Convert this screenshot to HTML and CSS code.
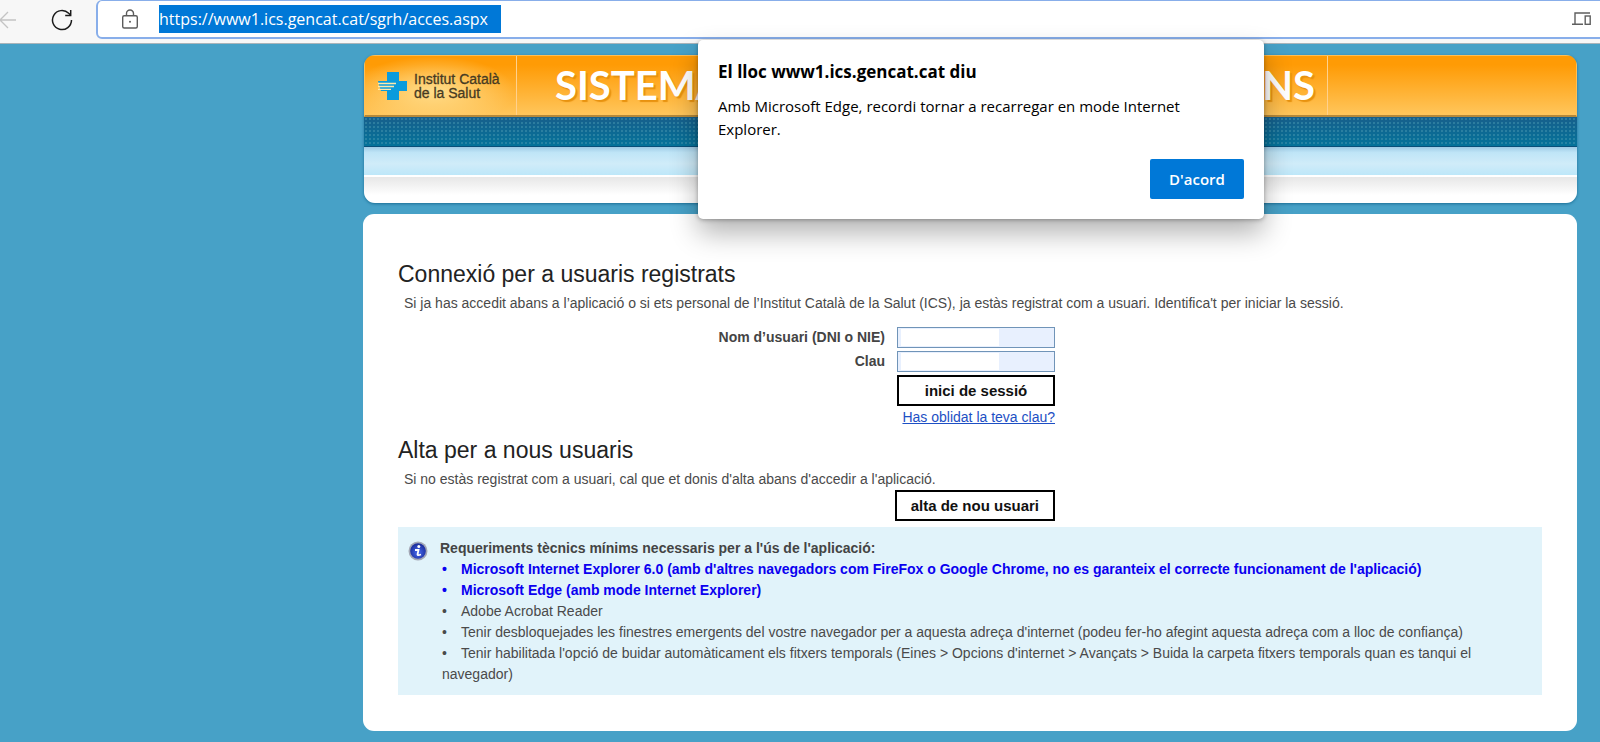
FILE: index.html
```html
<!DOCTYPE html>
<html lang="ca">
  <head>
    <meta charset="UTF-8" />
    <meta name="viewport" content="width=device-width, initial-scale=1.0" />
    <title>Institut Català de la Salut</title>
    <link rel="stylesheet" href="styles.css">
  </head>
  <body>
    <!-- Browser bar -->
    <div class="browser-bar">
      <button class="nav-button nav-back" aria-label="Enrere">
        <svg width="18" height="20" viewBox="0 0 18 20" fill="none" stroke="#c4c4c4" stroke-width="1.3">
          <path d="M16 10H0M8 2L0 10l8 8" />
        </svg>
      </button>
      <button class="nav-button nav-reload" aria-label="Actualitza">
        <svg width="22" height="22" viewBox="0 0 22 22" fill="none" stroke="#1b1b1b" stroke-width="1.5">
          <path d="M20.500 11A9.500 9.500 0 1 1 17.700 4.300L19.500 6" />
          <path d="M19.700 1v5.500h-5.500" />
        </svg>
      </button>
      <div class="address-box">
        <svg width="18" height="20" viewBox="0 0 18 20" fill="none" stroke="#5c5c5c" stroke-width="1.4">
          <rect x="1.700" y="6.700" width="14.600" height="12.300" rx="1.500" />
          <path d="M5.500 6.500V4.500a3.500 3.500 0 0 1 7 0v2" />
          <circle cx="9" cy="12.800" r="1" fill="#5c5c5c" stroke="none" />
        </svg>
        <input type="text" class="address" aria-label="Adreça" value="https://www1.ics.gencat.cat/sgrh/acces.aspx" />
        <svg class="devices" width="20" height="14" viewBox="0 0 20 14" fill="none" stroke="#5f5f5f" stroke-width="1.4">
          <path d="M18 1H3v11M0 12.300h11" />
          <rect x="13.200" y="4" width="5" height="8.300" />
        </svg>
      </div>
    </div>

    <div class="page">
      <!-- Header -->
      <header class="banner">
        <div class="banner-top">
          <div class="logo">
            <svg width="30" height="28" viewBox="0 0 30 28">
              <path fill="#0a9bdc" d="M9 0h12v9h8v10h-8v9H9v-9H3l-1-3-1-3-1-4h9z" />
              <path stroke="#ffe9ad" stroke-width="1.300" d="M0 11.500h18M0 14.500h16M0 17.300h13" />
            </svg>
            <span>Institut Català<br />de la Salut</span>
          </div>
          <h1 class="banner-title"><span>SISTEMA</span><span>NS</span></h1>
        </div>
        <div class="banner-menu"></div>
        <div class="banner-submenu"></div>
        <div class="banner-foot"></div>
      </header>

      <!-- Content -->
      <main class="panel">
        <h2>Connexió per a usuaris registrats</h2>
        <p>Si ja has accedit abans a l’aplicació o si ets personal de l’Institut Català de la Salut (ICS), ja estàs registrat com a usuari. Identifica't per iniciar la sessió.</p>

        <form class="login">
          <label for="user">Nom d’usuari (DNI o NIE)</label>
          <input type="text" id="user" />
          <label for="password">Clau</label>
          <input type="password" id="password" />
          <button type="button" class="action login-button">inici de sessió</button>
          <a href="#" class="forgot">Has oblidat la teva clau?</a>
        </form>

        <h2>Alta per a nous usuaris</h2>
        <p>Si no estàs registrat com a usuari, cal que et donis d'alta abans d'accedir a l'aplicació.</p>
        <div class="signup">
          <button type="button" class="action">alta de nou usuari</button>
        </div>

        <section class="info">
          <svg class="info-icon" width="20" height="20" viewBox="0 0 20 20">
            <defs>
              <radialGradient id="ball" cx="50%" cy="60%" r="55%">
                <stop offset="0" stop-color="#4a6cf0" />
                <stop offset="1" stop-color="#1c2f9e" />
              </radialGradient>
            </defs>
            <circle cx="10" cy="10" r="9.500" fill="#a3a7b5" />
            <circle cx="10" cy="10" r="7.800" fill="url(#ball)" />
            <circle cx="10.800" cy="5.600" r="1.500" fill="#fff" />
            <path d="M7 9h3.500l-1 4.500q0 1.200 3.500 0" fill="none" stroke="#fff" stroke-width="1.800" />
          </svg>
          <div class="info-text">
            <strong>Requeriments tècnics mínims necessaris per a l'ús de l'aplicació:</strong>
            <ul>
              <li class="important">Microsoft Internet Explorer 6.0 (amb d'altres navegadors com FireFox o Google Chrome, no es garanteix el correcte funcionament de l'aplicació)</li>
              <li class="important">Microsoft Edge (amb mode Internet Explorer)</li>
              <li>Adobe Acrobat Reader</li>
              <li>Tenir desbloquejades les finestres emergents del vostre navegador per a aquesta adreça d'internet (podeu fer-ho afegint aquesta adreça com a lloc de confiança)</li>
              <li>Tenir habilitada l'opció de buidar automàticament els fitxers temporals (Eines &gt; Opcions d'internet &gt; Avançats &gt; Buida la carpeta fitxers temporals quan es tanqui el navegador)</li>
            </ul>
          </div>
        </section>
      </main>
    </div>

    <!-- Alert -->
    <div class="alert" role="alertdialog" aria-labelledby="alert-title">
      <h2 id="alert-title">El lloc www1.ics.gencat.cat diu</h2>
      <p>Amb Microsoft Edge, recordi tornar a recarregar en mode Internet Explorer.</p>
      <button type="button">D'acord</button>
    </div>
  </body>
</html>
```
FILE: styles.css
```css
* {
  box-sizing: border-box;
}

body {
  margin: 0;
  background-color: #47a1c7;
  color: #4a4a4a;
  font-family: "Liberation Sans", Arial, sans-serif;
  font-size: 14px;
  line-height: 21px;
}

h1,
h2,
p,
ul {
  margin: 0;
  padding: 0;
}

/* Browser bar */
.browser-bar {
  display: flex;
  height: 44px;
  padding-bottom: 4px;
  overflow: hidden;
  background-color: #f7f7f7;
  border-bottom: 1px solid #a9b4ba;
}

.nav-button {
  display: flex;
  align-items: center;
  padding: 0;
  border: none;
  background: none;
}

.nav-back {
  width: 51px;
}

.nav-reload {
  width: 45px;
}

.address-box {
  flex: 1;
  display: flex;
  align-items: center;
  margin-right: -10px;
  padding: 0 16px 0 23px;
  background-color: white;
  border: 2px solid #88aeea;
  border-top-width: 1px;
  border-radius: 6px;
}

.address {
  width: 342px;
  height: 28px;
  margin-left: 20px;
  padding: 0;
  border: none;
  background-color: #0078d7;
  color: white;
  font-family: "Open Sans", sans-serif;
  font-size: 16px;
}

.devices {
  margin-left: auto;
}

.page {
  margin: 11px 23px 0 363px;
  padding-bottom: 11px;
}

/* Header */
.banner {
  margin-left: 1px;
  overflow: hidden;
  border-radius: 11px;
  box-shadow: 0 1px 3px #1d6f96;
}

.banner-top {
  display: flex;
  height: 62px;
  background: linear-gradient(#ff9b05 15%, #ffc65c);
  border: 1px solid #ffbf55;
  border-bottom: 2px solid #b5893a;
}

.logo {
  display: flex;
  align-items: center;
  gap: 6px;
  width: 152px;
  padding-left: 13px;
  background: radial-gradient(ellipse at 45% 60%, #ffdd8b, transparent 70%);
  border-right: 1px solid #ffd18d;
  color: #463a22;
  font-size: 14px;
  line-height: 14px;
  -webkit-text-stroke: 0.3px #463a22;
}

.banner-title {
  display: flex;
  justify-content: space-between;
  width: 811px;
  padding: 0 12px 0 38px;
  border-right: 1px solid #ffd18d;
  color: white;
  font-family: Lato, sans-serif;
  font-size: 40px;
  line-height: 58px;
  text-shadow: 2px 2px 1px #e8920f;
}

.banner-menu {
  height: 30px;
  background:
    radial-gradient(circle, rgba(70, 150, 175, 0.5) 1px, transparent 1px) 0 0 / 4px 4px,
    linear-gradient(#175f8c, #04739a);
  border-bottom: 1px solid #09507a;
}

.banner-submenu {
  height: 30px;
  background: linear-gradient(#9fcbe5, #bfe5f7 20%, #d0ecf9 60%, #bde7f9);
  border-bottom: 2px solid white;
}

.banner-foot {
  height: 26px;
  background: linear-gradient(#e7e7e7, white 70%);
}

/* Content */
.panel {
  margin-top: 11px;
  padding: 48px 35px 36px;
  background-color: white;
  border-radius: 11px;
}

.panel h2 {
  color: #222;
  font-size: 23px;
  font-weight: normal;
  line-height: 24px;
}

.panel p {
  margin-top: 7px;
  padding-left: 6px;
}

.login {
  display: grid;
  grid-template-columns: 487px 158px;
  column-gap: 12px;
  row-gap: 3px;
  margin: 13px 0;
}

.login label {
  color: #444;
  font-weight: bold;
  text-align: right;
}

.login input {
  height: 21px;
  border: 1px solid #7094b8;
  background: linear-gradient(white, white) 3px 1px / 98px 17px no-repeat #e8f0fe;
}

.login-button,
.forgot {
  grid-column: 2;
}

.forgot {
  justify-self: end;
  color: #1d4fc4;
  line-height: 16px;
  white-space: nowrap;
}

.action {
  height: 31px;
  padding: 0 14px;
  border: 2px solid black;
  background-color: white;
  color: #111;
  font-family: inherit;
  font-size: 15px;
  font-weight: bold;
}

.signup {
  width: 657px;
}

.signup .action {
  display: block;
  margin-left: auto;
}

.info {
  display: flex;
  gap: 12px;
  margin-top: 6px;
  padding: 11px 64px 10px 10px;
  background-color: #e1f3fa;
}

.info-icon {
  flex: none;
  margin-top: 3px;
}

.info strong {
  color: #444;
}

.info ul {
  padding-left: 2px;
  list-style: none;
}

.info li::before {
  content: "•";
  display: inline-block;
  width: 19px;
}

.info .important {
  color: #0a00f0;
  font-weight: bold;
}

/* Alert over the page */
.alert {
  position: absolute;
  top: 40px;
  left: 698px;
  width: 566px;
  padding: 20px;
  background-color: white;
  border-radius: 5px;
  box-shadow: 0 14px 28px rgba(0, 0, 0, 0.3), 0 1px 4px rgba(0, 0, 0, 0.3);
  color: black;
  font-family: "Open Sans", sans-serif;
  font-size: 15px;
  line-height: 23px;
}

.alert h2 {
  font-size: 17px;
  line-height: 23px;
}

.alert p {
  margin: 12px 0 18px;
}

.alert button {
  display: block;
  width: 94px;
  height: 40px;
  margin-left: auto;
  border: none;
  border-radius: 2px;
  background-color: #0078d7;
  color: white;
  font-family: inherit;
  font-size: 15px;
  font-weight: 600;
}
```
